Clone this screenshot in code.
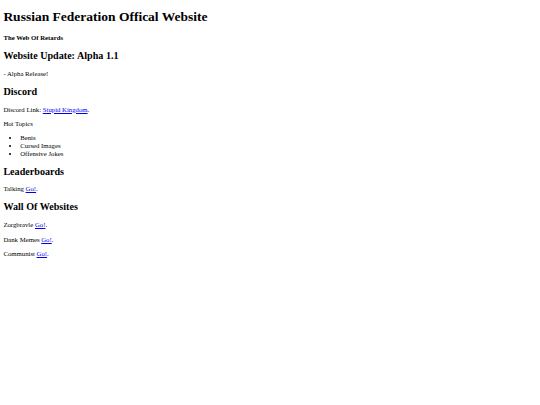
import React from "react";

// the page is a plain browser-default document, shown at 0.421875 scale
const Go = ({ children = "Go!" }) => (
  <a href="#" className="text-[#0000ee] underline">
    {children}
  </a>
);

const P = ({ children }) => <p className="my-[6.75px] leading-[7.594px]">{children}</p>;

const H2 = ({ children }) => (
  <h2 className="text-[10.125px] leading-[11.39px] font-bold my-[8.404px]">{children}</h2>
);

const App = () => {
  return (
    <div className="m-[3.375px] font-['Liberation_Serif',_'Times_New_Roman',_serif] text-black text-[6.75px] leading-[7.594px]">
      <h1 className="text-[13.5px] leading-[15.61px] font-bold my-[9.045px]">Russian Federation Offical Website</h1>
      <h4 className="text-[6.75px] leading-[7.594px] font-bold my-[8.98px]">The Web Of Retards</h4>
      <H2>Website Update: Alpha 1.1</H2>
      <P>- Alpha Release!</P>
      <H2>Discord</H2>
      <P>
        Discord Link: <Go>Stupid Kingdom</Go>.
      </P>
      <P>Hot Topics</P>
      <ul className="list-disc pl-[16.875px] my-[6.75px] leading-[7.594px]">
        <li>Benis</li>
        <li>Cursed Images</li>
        <li>Offensive Jokes</li>
      </ul>
      <H2>Leaderboards</H2>
      <P>
        Talking <Go />.
      </P>
      <H2>Wall Of Websites</H2>
      <P>
        Zorgbravle <Go />.
      </P>
      <P>
        Dank Memes <Go />.
      </P>
      <P>
        Communist <Go />.
      </P>
    </div>
  );
};

export default App;
